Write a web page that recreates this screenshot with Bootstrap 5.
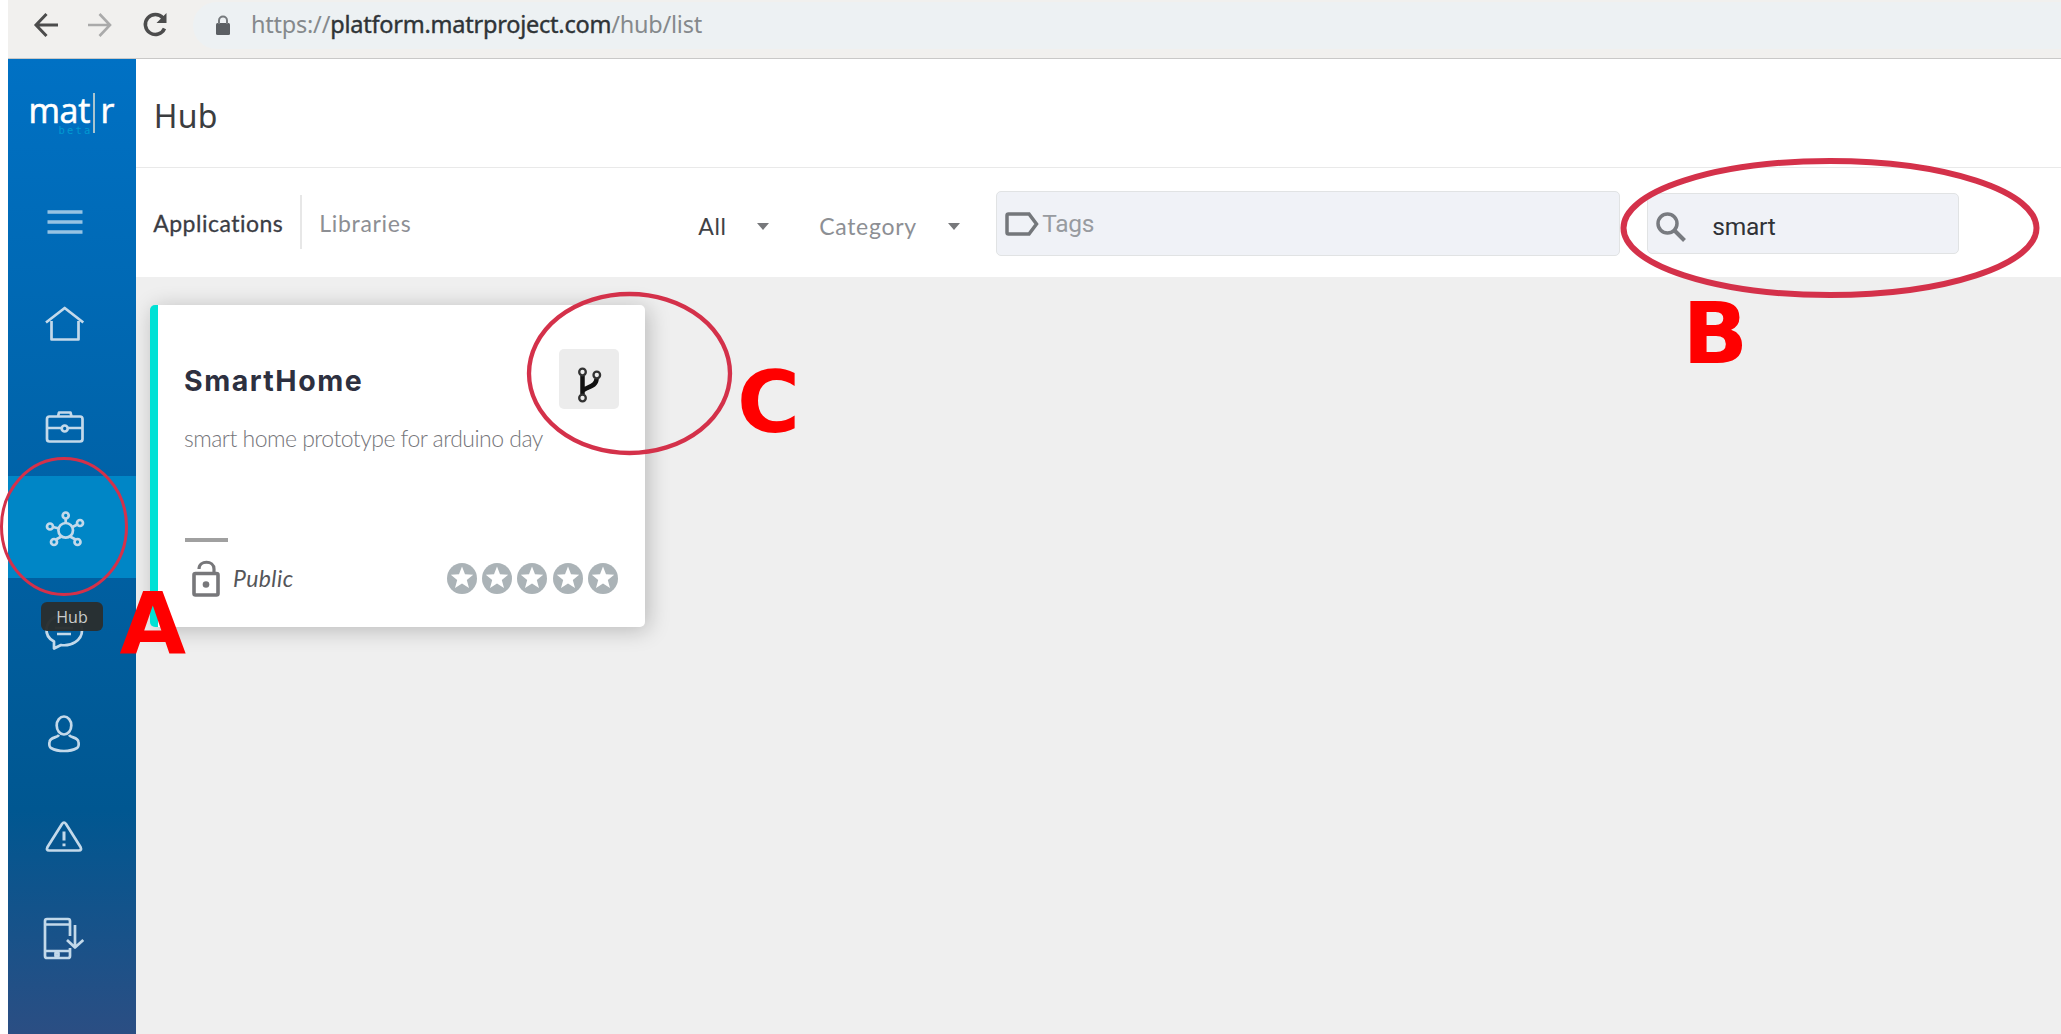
<!DOCTYPE html>
<html lang="en">
<head>
<meta charset="utf-8">
<title>Hub</title>
<link href="https://cdn.jsdelivr.net/npm/bootstrap@5.3.0/dist/css/bootstrap.min.css" rel="stylesheet">
<style>
body{width:2061px;height:1034px;overflow:hidden;background:#fff;font-family:Lato,sans-serif;line-height:1}
svg{display:block;overflow:visible;flex:none}
.chrome{margin-left:8px;height:59px;background:#f1f0ee;border-bottom:1.5px solid #c9c8c7}
.nav-arrows{padding-left:26px;gap:30px;width:185px}
.urlbar{height:47px;margin-bottom:7px;background:#edf1f3;border-radius:24px 0 0 24px;padding-left:23px;font-family:"Noto Sans",sans-serif;font-size:23.5px;color:#85898c}
.urlbar .addr{margin-left:21px;margin-top:-1px;letter-spacing:-.23px;white-space:nowrap}
.urlbar .host{color:#2f3437;-webkit-text-stroke:.4px #2f3437}
.app{margin-left:8.4px;height:974.7px}
.sidebar{width:127.8px;background:linear-gradient(#0071c4 0,#005791 77%,#2b4e83 100%)}
.brand{height:109.3px;padding:32px 0 0 20px}
.brand-name{font-family:"Open Sans",sans-serif;font-size:34px;letter-spacing:-.3px;color:#fff;line-height:38px;height:38px;font-weight:500;-webkit-text-stroke:.6px #fff}
.brand-name i{width:2.5px;height:40px;background:#a9c4cf;margin:2px 5px 0 3px}
.brand-beta{font-family:"DejaVu Sans Mono",monospace;font-size:10.5px;letter-spacing:2.2px;color:#009ad2;margin:-4px 0 0 30px;line-height:11px}
.side-item{height:102.5px;padding-left:31.6px}
.side-item.on{background:#0086c6}
.side-item svg{fill:none;stroke:#c3d9ea;stroke-width:2.7;stroke-linejoin:round}
.pagehead{height:109px;border-bottom:1.5px solid #e9e9e9;padding:5px 0 0 17.5px;font-family:"Noto Sans",sans-serif;font-size:32px;color:#3b3d40;letter-spacing:.3px}
.toolbar{height:108.6px;font-size:23px;color:#8d8f94;white-space:nowrap}
.tab-a{color:#3b3d44;width:149px;height:54px;margin-left:17px;padding-top:2px;border-right:2px solid #e7e7e7;letter-spacing:.5px;-webkit-text-stroke:.3px #3b3d44}
.tab-b{width:380px;padding:2px 0 0 17px;letter-spacing:.7px}
.pick{margin-top:9px;letter-spacing:.7px}
.caret-d{border:6.5px solid transparent;border-top:7px solid #77787b;border-bottom:0;margin-top:9px}
.pick-all{color:#404246;width:59px;margin-left:16px}
.pick-cat{width:129px}
.caret-all{margin-right:50px}
.field{background:#f0f2f7;border:1.5px solid #e1e3e4;border-radius:5px;font-family:Roboto,sans-serif;font-size:24.5px}
.tags{width:624px;height:65px;margin:2px 0 0 36px;padding:1px 0 0 8px;color:#989ba0;letter-spacing:-.3px}
.find{width:312px;height:61px;margin:2px 0 0 26.5px;padding:7px 0 0 8px;color:#303237;letter-spacing:-.2px}
.board{background:#efefef;padding:28px 0 0 13.8px}
.appcard{width:495px;height:322px;background:#fff;border-radius:5px;border-left:8.5px solid #00e1d5;box-shadow:3px 3px 22px rgba(0,0,0,.23);padding:44px 27px 0 26px}
.appcard h2{font-family:Inter,sans-serif;font-size:28.5px;font-weight:700;color:#2d3040;margin:15px 0 0;letter-spacing:1.5px}
.fork{width:60px;height:60px;background:#ececec;border-radius:5px;margin-right:-1px}
.desc{font-weight:300;font-size:23px;letter-spacing:-.52px;color:#75757a;margin-top:18px;height:111px;white-space:nowrap}
.dash{width:43px;height:4px;background:#a0a0a0;margin-left:1px}
.card-foot{margin-top:18px}
.lock{margin-left:8px}
.public{font-style:italic;font-size:23px;letter-spacing:.4px;color:#55565a;margin-left:13px}
.stars{gap:5.3px}
.overlay{left:0;top:0;pointer-events:none}
.tip{left:41px;top:602px;width:62px;height:29px;padding-top:1px;border-radius:6px;background:rgba(41,46,47,.97);color:#c9cccc;font-family:"Open Sans",sans-serif;font-size:16px}
</style>
<script src="https://cdn.jsdelivr.net/npm/bootstrap@5.3.0/dist/js/bootstrap.bundle.min.js"></script>
</head>
<body class="position-relative">
<header class="chrome d-flex align-items-center">
  <div class="nav-arrows d-flex align-items-center pb-2">
    <svg width="24" height="24" fill="none" stroke="#4c4c4c" stroke-width="3"><path d="M24 12H2M12.500 1 2 12l10.500 11"/></svg>
    <svg width="24" height="24" fill="none" stroke="#aaa" stroke-width="2.600"><path d="M0 12h22M11.500 1 22 12 11.500 23"/></svg>
    <svg width="25" height="24" fill="none" stroke="#4c4c4c" stroke-width="3.500"><path d="M21 5A10 10 0 1 0 22.500 15.500"/><path d="M24.500 0v10h-10z" fill="#4c4c4c" stroke="none"/></svg>
  </div>
  <div class="urlbar flex-grow-1 d-flex align-items-center">
    <svg width="14" height="20" fill="#5b5f63"><rect y="7" width="14" height="12" rx="1.500"/><path d="M3 8V4.500a4 4 0 0 1 8 0V8" fill="none" stroke="#777b7e" stroke-width="2"/></svg>
    <div class="addr">https://<span class="host">platform.matrproject.com</span>/hub/list</div>
  </div>
</header>
<div class="app d-flex">
  <nav class="sidebar flex-shrink-0">
    <div class="brand">
      <div class="brand-name d-flex"><span>mat</span><i></i><span>r</span></div>
      <div class="brand-beta">beta</div>
    </div>
    <div class="side-item d-flex align-items-center"><svg width="48" height="48" viewBox="40 195.500 48 48"><path stroke="#96c3e3" stroke-width="3.300" d="M47.500 211.500h35M47.500 221.500h35M47.500 231.500h35"/></svg></div>
    <div class="side-item d-flex align-items-center"><svg width="48" height="48" viewBox="40 298 48 48"><path d="M46 322.500 64.700 308l18.600 14.500M51.500 321v18.500h27V321"/></svg></div>
    <div class="side-item d-flex align-items-center"><svg width="48" height="48" viewBox="40 400.500 48 48"><rect x="47" y="416" width="35.500" height="25" rx="2.500"/><path d="M58 416l1-4h11.500l1 4M47 427.500h14.500M68 427.500h14.500"/><circle cx="64.700" cy="428" r="3"/></svg></div>
    <div class="side-item on d-flex align-items-center"><svg width="48" height="48" viewBox="40 503 48 48"><circle cx="65.700" cy="530.300" r="7.300"/><circle cx="65.700" cy="515.500" r="3"/><circle cx="80" cy="523" r="3"/><circle cx="77.500" cy="542" r="3"/><circle cx="54" cy="542" r="3"/><circle cx="50" cy="526.500" r="3"/><path d="M65.700 518.500v4.500M72.500 527l4.800-2.500M70 536.500l5.500 3M61.500 536.500l-5.500 3M53 527l6 1.500"/></svg></div>
    <div class="side-item d-flex align-items-center"><svg width="48" height="48" viewBox="40 605.500 48 48"><path d="M54 648V641C48 638 46 634 46.500 628 48 619 56 614.500 64 614.500c9 0 18 6 18 15.500 0 10-11 16-21 14.500zM57 633.500h14M55 627.500h18"/></svg></div>
    <div class="side-item d-flex align-items-center"><svg width="48" height="48" viewBox="40 708 48 48"><ellipse cx="64" cy="725.500" rx="7.300" ry="9"/><path d="M59 735c-2 3-9 2-9.500 7-.5 3-.3 5 1.500 6 7 4 19 4 26 0 1.800-1 2-3 1.500-6-.5-5-7.500-4-9.500-7"/></svg></div>
    <div class="side-item d-flex align-items-center"><svg width="48" height="48" viewBox="40 810.500 48 48"><path d="M62 823.500q2-3 4 0l14.500 23q1.500 3.500-1.500 3.500H49q-3 0-1.500-3.500z"/><path d="M64 831v9M64 843v2.800" stroke-width="3"/></svg></div>
    <div class="side-item d-flex align-items-center"><svg width="48" height="48" viewBox="40 913 48 48"><path d="M70 936v-15q0-2-2-2H47q-2 0-2 2v35q0 2 2 2h21q2 0 2-2v-8M45 924.500h25M45 951h25M75 925v21.500M67 940l8 7.500 8.300-7.500"/><path d="M55.500 953h3v3h-3z"/></svg></div>
  </nav>
  <main class="flex-grow-1 d-flex flex-column">
    <div class="pagehead d-flex align-items-center">Hub</div>
    <div class="toolbar d-flex align-items-center flex-shrink-0">
      <div class="tab-a d-flex align-items-center">Applications</div>
      <div class="tab-b">Libraries</div>
      <div class="pick pick-all">All</div>
      <div class="caret-d caret-all"></div>
      <div class="pick pick-cat">Category</div>
      <div class="caret-d"></div>
      <div class="field tags d-flex align-items-center"><svg width="34" height="24" fill="none" stroke="#74777b" stroke-width="3.500"><path d="M3.500 2h20.500l7.500 10-7.500 10H3.500q-1.500 0-1.500-1.500v-17Q2 2 3.500 2z"/></svg><span style="margin-left:3px">Tags</span></div>
      <div class="field find d-flex align-items-center"><svg width="31" height="30" fill="none" stroke="#787b80" stroke-width="3.500"><circle cx="11.500" cy="11.500" r="9.500"/><path d="M18.500 18.500 28.500 28.500" stroke-width="4"/></svg><span style="margin-left:25.5px">smart</span></div>
    </div>
    <section class="board flex-grow-1">
      <article class="appcard">
        <div class="d-flex justify-content-between"><h2>SmartHome</h2>
          <div class="fork"><svg width="60" height="60" fill="none" stroke="#111" stroke-width="4.500"><path d="M23.500 27v18M37.500 30c0 9-14 8-14 13"/><g stroke-width="2.300" stroke="#333" fill="#eee"><circle cx="23.500" cy="23" r="3.300"/><circle cx="23.500" cy="49" r="3.300"/><circle cx="37.800" cy="26" r="3.300"/></g></svg></div>
        </div>
        <div class="desc">smart home prototype for arduino day</div>
        <div class="dash"></div>
        <div class="card-foot d-flex align-items-center">
          <svg class="lock" width="28" height="37" fill="none" stroke="#77777a" stroke-width="3.600"><rect x="2" y="13.500" width="24" height="21.500" rx="1.500"/><path d="M7 9c0-9 15-9 15 0v4" stroke-width="3.200"/><circle cx="14" cy="24.500" r="3.300" fill="#77777a" stroke="none"/></svg>
          <span class="public">Public</span>
          <div class="stars d-flex ms-auto" id="stars"></div>
        </div>
      </article>
    </section>
  </main>
</div>
<div class="tip position-absolute d-flex align-items-center justify-content-center">Hub</div>
<svg class="overlay position-absolute" width="2061" height="1034" fill="none" stroke="#d4314a">
  <ellipse cx="64" cy="526.500" rx="62.500" ry="68" stroke-width="3"/>
  <ellipse cx="629.500" cy="373.500" rx="100.500" ry="79.500" stroke-width="4.300"/>
  <ellipse cx="1830" cy="228" rx="206.500" ry="67" stroke-width="6"/>
  <g fill="#f00" stroke="none" font-family="DejaVu Sans" font-weight="700" font-size="86"><text x="119.500" y="653">A</text><text x="1682.500" y="362.700">B</text><text x="737" y="431.700">C</text></g>
</svg>
<script>
document.getElementById('stars').innerHTML='<svg width="30" height="31" viewBox="0 0 30 31"><ellipse cx="15" cy="15.500" rx="15" ry="15.500" fill="#abb3b7"/><path fill="#fff" d="M15 3.500l3 7.800 8.200.4-6.400 5.200 2.200 8.100-7-4.600-7 4.600 2.200-8.100-6.400-5.200 8.200-.4z"/></svg>'.repeat(5);
</script>
</body>
</html>
